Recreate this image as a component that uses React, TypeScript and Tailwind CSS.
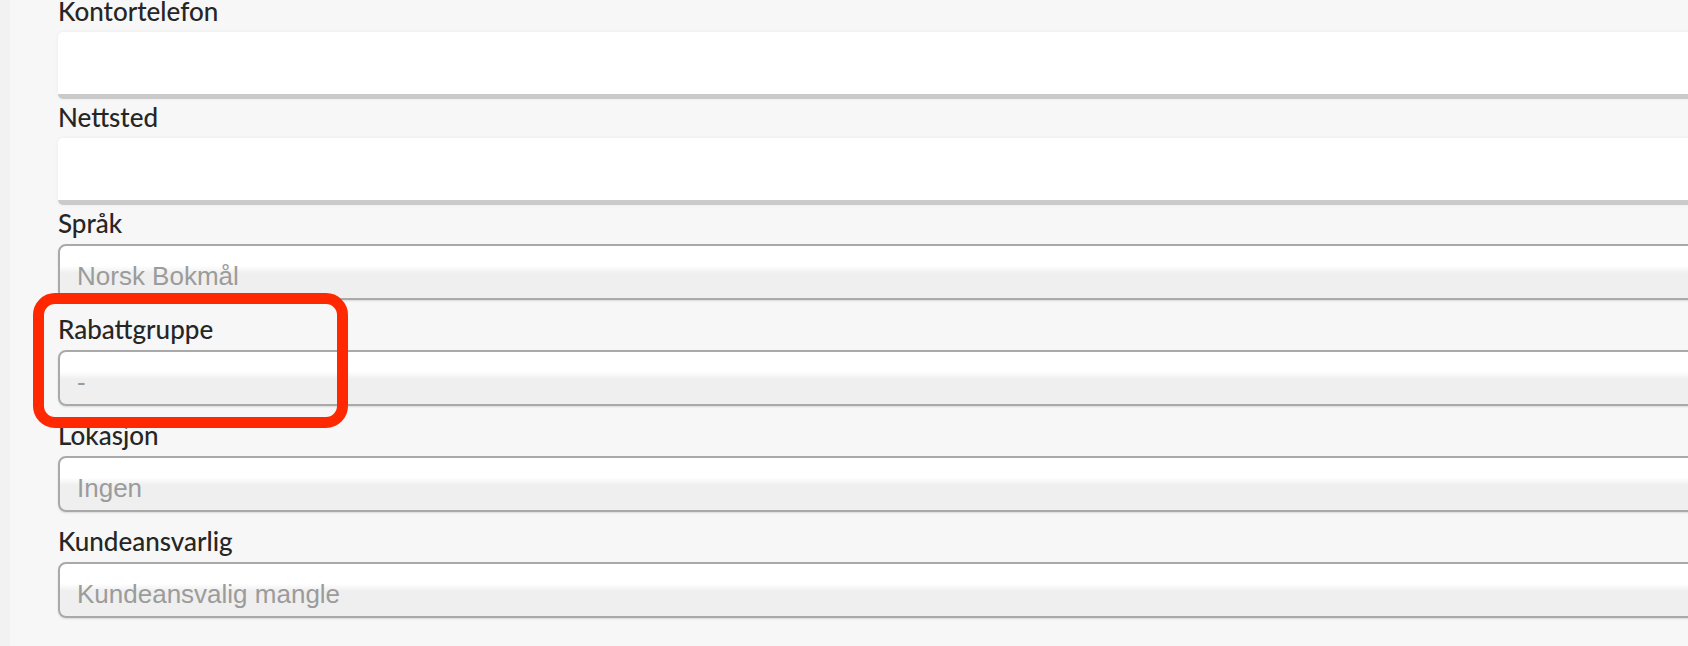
import React from "react";

type Field = {
  label: string;
  kind: "text" | "select";
  value?: string;
};

const fields: Field[] = [
  { label: "Kontortelefon", kind: "text" },
  { label: "Nettsted", kind: "text" },
  { label: "Språk", kind: "select", value: "Norsk Bokmål" },
  { label: "Rabattgruppe", kind: "select", value: "-" },
  { label: "Lokasjon", kind: "select", value: "Ingen" },
  { label: "Kundeansvarlig", kind: "select", value: "Kundeansvalig mangle" },
];

const labelFont = { fontFamily: "Lato, 'Open Sans', sans-serif" };
const controlFont = { fontFamily: "'Liberation Sans', Arial, sans-serif" };

const TextInput = () => (
  <div className="h-[67px] w-full rounded-[5px] bg-white border-b-[5px] border-[#cacaca] shadow-[0_0_4px_rgba(0,0,0,0.05)]" />
);

const SelectBox = ({ value }: { value?: string }) => (
  <div
    className="mb-[11px] h-[56px] w-full rounded-[8px] border-2 border-[#a9a9a9] bg-[linear-gradient(to_bottom,#ffffff_0%,#ffffff_38%,#efefef_52%,#efefef_100%)] pl-[17px] pt-[12px] text-[26px] leading-[36px] text-[#9b9b9b] shadow-[0_1px_2px_rgba(0,0,0,0.12)]"
    style={controlFont}
  >
    {value}
  </div>
);

export default function App() {
  return (
    <div className="relative flex h-[646px] w-[1688px] overflow-hidden bg-[#f7f7f7]">
      {/* left gutter */}
      <div className="w-[10px] shrink-0 bg-[#f2f2f2]" />

      {/* form column, runs off the right edge */}
      <div className="ml-[48px] flex w-[1700px] shrink-0 flex-col">
        {fields.map((f, i) => (
          <div key={f.label} className="flex flex-col">
            <div className={i === 0 ? "h-[32px]" : "h-[39px] pt-[3px]"}>
              <label
                className={`block text-[26px] font-medium text-[#262626] ${
                  i === 0 ? "leading-[23px]" : "leading-[31px]"
                }`}
                style={labelFont}
              >
                {f.label}
              </label>
            </div>
            {f.kind === "text" ? <TextInput /> : <SelectBox value={f.value} />}
          </div>
        ))}
      </div>

      {/* annotation highlight */}
      <div className="pointer-events-none absolute left-[33px] top-[293px] h-[135px] w-[315px] rounded-[22px] border-[11px] border-[#ff2800]" />
    </div>
  );
}
